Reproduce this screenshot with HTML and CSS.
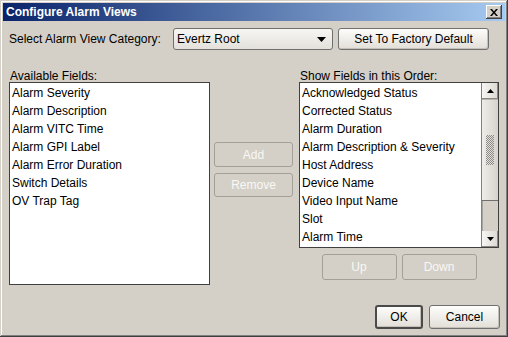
FILE: index.html
```html
<!DOCTYPE html>
<html>
<head>
  <meta charset="utf-8">
  <link rel="stylesheet" href="styles.css">
</head>
<body>
  <div class="window">
    <div class="titlebar">
      <span class="title">Configure Alarm Views</span>
      <div class="close-btn">
        <svg width="8" height="7" viewBox="0 0 8 7"><path d="M0 0h2l2 2.5 2-2.5h2l-3 3.5 3 3.5h-2l-2-2.5-2 2.5h-2l3-3.5z" fill="#000"/></svg>
      </div>
    </div>

    <div class="content">
      <div class="top-row">
        <span class="category-label">Select Alarm View Category:</span>
        <div class="combo">
          <span>Evertz Root</span>
          <svg class="combo-arrow" width="9" height="5" viewBox="0 0 9 5"><path d="M0 0h9l-4.5 5z" fill="#000"/></svg>
        </div>
        <button class="btn factory-btn">Set To Factory Default</button>
      </div>

      <div class="lists">
        <div class="left-col">
          <div class="field-label">Available Fields:</div>
          <div class="list available-list">
            <div class="list-items">
              <div class="list-item">Alarm Severity</div>
              <div class="list-item">Alarm Description</div>
              <div class="list-item">Alarm VITC Time</div>
              <div class="list-item">Alarm GPI Label</div>
              <div class="list-item">Alarm Error Duration</div>
              <div class="list-item">Switch Details</div>
              <div class="list-item">OV Trap Tag</div>
            </div>
          </div>
        </div>

        <div class="mid-col">
          <button class="btn disabled add-btn">Add</button>
          <button class="btn disabled remove-btn">Remove</button>
        </div>

        <div class="right-col">
          <div class="field-label">Show Fields in this Order:</div>
          <div class="list order-list">
            <div class="list-items">
              <div class="list-item">Acknowledged Status</div>
              <div class="list-item">Corrected Status</div>
              <div class="list-item">Alarm Duration</div>
              <div class="list-item">Alarm Description &amp; Severity</div>
              <div class="list-item">Host Address</div>
              <div class="list-item">Device Name</div>
              <div class="list-item">Video Input Name</div>
              <div class="list-item">Slot</div>
              <div class="list-item">Alarm Time</div>
            </div>
            <div class="scrollbar">
              <div class="scroll-btn">
                <svg width="7" height="4" viewBox="0 0 7 4"><path d="M3.5 0l3.5 4h-7z" fill="#000"/></svg>
              </div>
              <div class="scroll-track">
                <div class="scroll-thumb">
                  <div class="grip"></div>
                </div>
              </div>
              <div class="scroll-btn">
                <svg width="7" height="4" viewBox="0 0 7 4"><path d="M0 0h7l-3.5 4z" fill="#000"/></svg>
              </div>
            </div>
          </div>
          <div class="order-controls">
            <button class="btn disabled move-btn">Up</button>
            <button class="btn disabled move-btn">Down</button>
          </div>
        </div>
      </div>

      <div class="footer">
        <button class="btn default ok-btn">OK</button>
        <button class="btn cancel-btn">Cancel</button>
      </div>
    </div>
  </div>
</body>
</html>
```

FILE: styles.css
```css
body {
  margin: 0;
  font-family: "Liberation Sans", Arial, sans-serif;
  font-size: 12px;
  color: #000;
}

.window {
  width: 508px;
  height: 337px;
  box-sizing: border-box;
  padding: 3px;
  background-color: #d4d0c8;
  box-shadow: inset -1px -1px #404040, inset 1px 1px #d4d0c8, inset -2px -2px #808080, inset 2px 2px #fff;
  display: flex;
  flex-direction: column;
}

.titlebar {
  height: 18px;
  display: flex;
  align-items: center;
  justify-content: space-between;
  padding: 0 3px;
  background: linear-gradient(to right, #0a246a, #a6caf0);
  color: white;
  font-weight: bold;
}

.close-btn {
  width: 16px;
  height: 14px;
  display: flex;
  align-items: center;
  justify-content: center;
  background-color: #d4d0c8;
  box-shadow: inset -1px -1px #404040, inset 1px 1px #fff, inset -2px -2px #808080;
}

.content {
  flex: 1;
  display: flex;
  flex-direction: column;
  padding: 7px 0 0 6px;
}

.top-row {
  display: flex;
  align-items: center;
  height: 22px;
}

.category-label {
  width: 164px;
}

.combo {
  width: 160px;
  height: 22px;
  box-sizing: border-box;
  display: flex;
  align-items: center;
  justify-content: space-between;
  padding: 0 6px 0 3px;
  margin-right: 5px;
  border: 1px solid #6f6f6f;
  border-radius: 3px;
  background: linear-gradient(#f7f6f3, #e4e1db);
}

.btn {
  box-sizing: border-box;
  padding: 0;
  font-family: inherit;
  font-size: 12px;
  color: #000;
  border: 1px solid #707070;
  border-radius: 3px;
  background: linear-gradient(#fdfdfb, #e2dfd8);
  box-shadow: inset -1px -1px #c4c0b8;
}

.btn.disabled {
  border-color: #a3a09a;
  background: #d4d0c8;
  box-shadow: none;
  color: #f8f8f6;
}

.btn.default {
  border: 2px solid #4a4a4a;
}

.factory-btn {
  width: 151px;
  height: 22px;
}

.lists {
  display: flex;
  margin-top: 18px;
}

.field-label {
  height: 14px;
  line-height: 16px;
  padding-left: 1px;
}

.left-col {
  width: 201px;
}

.list {
  box-sizing: border-box;
  border: 1px solid #404040;
  background-color: white;
  display: flex;
}

.available-list {
  height: 203px;
}

.list-items {
  flex: 1;
  overflow: hidden;
  padding-top: 1px;
}

.list-item {
  height: 18px;
  line-height: 18px;
  padding-left: 2px;
  white-space: nowrap;
}

.mid-col {
  width: 79px;
  margin-left: 4px;
  padding-top: 74px;
  display: flex;
  flex-direction: column;
  gap: 6px;
}

.add-btn {
  height: 25px;
}

.remove-btn {
  height: 24px;
}

.right-col {
  width: 200px;
  margin-left: 6px;
}

.order-list {
  height: 166px;
}

.scrollbar {
  width: 16px;
  display: flex;
  flex-direction: column;
  border-left: 1px solid #808080;
}

.scroll-btn {
  height: 16px;
  display: flex;
  align-items: center;
  justify-content: center;
  background: linear-gradient(to right, #f7f6f3, #dcd9d2);
  box-shadow: inset -1px -1px #8a8780;
}

.scroll-track {
  flex: 1;
  background-color: #d4d0c8;
  box-shadow: inset 1px 0 #a8a59e;
}

.scroll-thumb {
  height: 102px;
  box-sizing: border-box;
  display: flex;
  align-items: center;
  justify-content: center;
  border-bottom: 1px solid #6f6f6f;
  border-top: 1px solid #b8b5ae;
  background: linear-gradient(to right, #efede8, #d6d3cc);
}

.grip {
  width: 8px;
  height: 30px;
  background: repeating-conic-gradient(#8a8a8a 0 25%, transparent 0 50%) 0 0 / 2px 2px;
}

.order-controls {
  display: flex;
  justify-content: center;
  gap: 5px;
  margin-top: 6px;
}

.move-btn {
  width: 75px;
  height: 26px;
}

.footer {
  display: flex;
  justify-content: flex-end;
  gap: 6px;
  margin-top: 20px;
  padding-right: 5px;
}

.ok-btn {
  width: 48px;
  height: 24px;
}

.cancel-btn {
  width: 71px;
  height: 24px;
}
```
